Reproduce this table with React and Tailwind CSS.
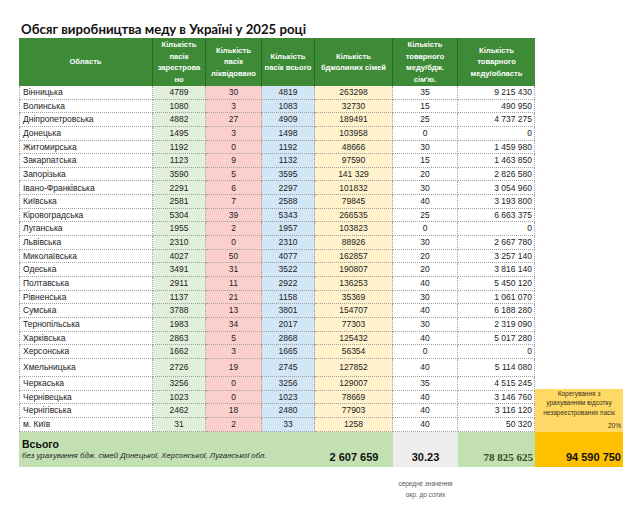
import React from "react";

const rows = [
  ["Вінницька", "4789", "30", "4819", "263298", "35", "9 215 430"],
  ["Волинська", "1080", "3", "1083", "32730", "15", "490 950"],
  ["Дніпропетровська", "4882", "27", "4909", "189491", "25", "4 737 275"],
  ["Донецька", "1495", "3", "1498", "103958", "0", "0"],
  ["Житомирська", "1192", "0", "1192", "48666", "30", "1 459 980"],
  ["Закарпатська", "1123", "9", "1132", "97590", "15", "1 463 850"],
  ["Запорізька", "3590", "5", "3595", "141 329", "20", "2 826 580"],
  ["Івано-Франківська", "2291", "6", "2297", "101832", "30", "3 054 960"],
  ["Київська", "2581", "7", "2588", "79845", "40", "3 193 800"],
  ["Кіровоградська", "5304", "39", "5343", "266535", "25", "6 663 375"],
  ["Луганська", "1955", "2", "1957", "103823", "0", "0"],
  ["Львівська", "2310", "0", "2310", "88926", "30", "2 667 780"],
  ["Миколаївська", "4027", "50", "4077", "162857", "20", "3 257 140"],
  ["Одеська", "3491", "31", "3522", "190807", "20", "3 816 140"],
  ["Полтавська", "2911", "11", "2922", "136253", "40", "5 450 120"],
  ["Рівненська", "1137", "21", "1158", "35369", "30", "1 061 070"],
  ["Сумська", "3788", "13", "3801", "154707", "40", "6 188 280"],
  ["Тернопільська", "1983", "34", "2017", "77303", "30", "2 319 090"],
  ["Харківська", "2863", "5", "2868", "125432", "40", "5 017 280"],
  ["Херсонська", "1662", "3", "1665", "56354", "0", "0"],
  ["Хмельницька", "2726", "19", "2745", "127852", "40", "5 114 080"],
  ["Черкаська", "3256", "0", "3256", "129007", "35", "4 515 245"],
  ["Чернівецька", "1023", "0", "1023", "78669", "40", "3 146 760"],
  ["Чернігівська", "2462", "18", "2480", "77903", "40", "3 116 120"],
  ["м. Київ", "31", "2", "33", "1258", "40", "50 320"],
];

const cell = "border-r border-b border-dotted border-[#a0a0a0] flex items-center leading-none";
const hdr = "bg-[#3d8a37] text-white font-bold text-[7.6px] leading-[11.5px] flex items-center justify-center text-center border-r border-[#2c6a28]";

export default function App() {
  return (
    <div className="w-[640px] h-[517px] bg-white text-[#222] font-['Liberation_Sans',Arial,sans-serif] relative">
      <div className="pt-[20px] pl-[21px] h-[38px] text-[13.2px] font-bold leading-[18px] text-[#111] font-['Lato',sans-serif]">
        Обсяг виробництва меду в Україні у 2025 році
      </div>
      <div className="ml-[19px] grid grid-cols-[134px_53px_56px_53px_78px_65px_77px_88px] grid-rows-[48px_repeat(20,13.65px)_18px_repeat(4,13.75px)_35px] text-[8.5px]">
        <div className={hdr}>Область</div>
        <div className={hdr}>
          Кількість
          <br />
          пасік
          <br />
          зарестрова
          <br />
          но
        </div>
        <div className={hdr}>
          Кількість
          <br />
          пасік
          <br />
          ліквідовано
        </div>
        <div className={hdr}>
          Кількість
          <br />
          пасік всього
        </div>
        <div className={hdr}>
          Кількість
          <br />
          бджолиних сімей
        </div>
        <div className={hdr}>
          Кількість
          <br />
          товарного
          <br />
          меду/бдж.
          <br />
          сім'ю.
        </div>
        <div className={hdr + " border-r-0"}>
          Кількість
          <br />
          товарного
          <br />
          меду/область
        </div>
        <div></div>
        {rows.map((r, i) => (
          <React.Fragment key={i}>
            <div className={cell + " border-l pl-[3px]"}>{r[0]}</div>
            <div className={cell + " justify-center bg-[#e2efda]"}>{r[1]}</div>
            <div className={cell + " justify-center bg-[#fccfcf]"}>{r[2]}</div>
            <div className={cell + " justify-center bg-[#d3e6f6]"}>{r[3]}</div>
            <div className={cell + " justify-center bg-[#fff2cc]"}>{r[4]}</div>
            <div className={cell + " justify-center"}>{r[5]}</div>
            <div className={cell + " justify-end pr-[2px]"}>{r[6]}</div>
            {i < 22 ? (
              <div></div>
            ) : i === 22 ? (
              <div className="row-span-3 -mt-[2px] bg-[#ffd966] flex flex-col text-[6.5px] leading-[9.5px] text-[#3a3020]">
                <div className="text-center">Корегування з</div>
                <div className="text-center">урахуванням відсотку</div>
                <div className="text-center">незареєстрованих пасік</div>
                <div className="text-right pr-[2px] mt-auto pb-[1px]">20%</div>
              </div>
            ) : null}
          </React.Fragment>
        ))}
        <div className="col-span-4 bg-[#c3e0b2] flex flex-col justify-center pl-[3px]">
          <div className="font-bold text-[10.5px] leading-[13px] text-[#111]">Всього</div>
          <div className="italic text-[7.8px] leading-[10px]">
            без урахування бдж. сімей Донецької, Херсонської, Луганської обл.
          </div>
        </div>
        <div className="bg-[#c3e0b2] flex items-end justify-center pb-[3px] font-bold text-[11px] leading-[13px] text-[#111]">
          2 607 659
        </div>
        <div className="bg-[#ededed] flex items-end justify-center pb-[3px] font-bold text-[11px] leading-[13px] text-[#111]">
          30.23
        </div>
        <div className="bg-[#c3e0b2] flex items-end justify-end pr-[2px] pb-[3px] font-bold text-[11px] leading-[13px] text-[#2f4f1f] font-['Liberation_Serif',serif]">
          78 825 625
        </div>
        <div className="bg-[#ffc000] flex items-end justify-end pr-[2px] pb-[3px] font-bold text-[11px] leading-[13px] text-[#111]">
          94 590 750
        </div>
        <div className="col-start-6 pt-[11px] text-center text-[6.5px] leading-[11px] text-[#555]">
          середнє значення
          <br />
          окр. до сотих
        </div>
      </div>
    </div>
  );
}
